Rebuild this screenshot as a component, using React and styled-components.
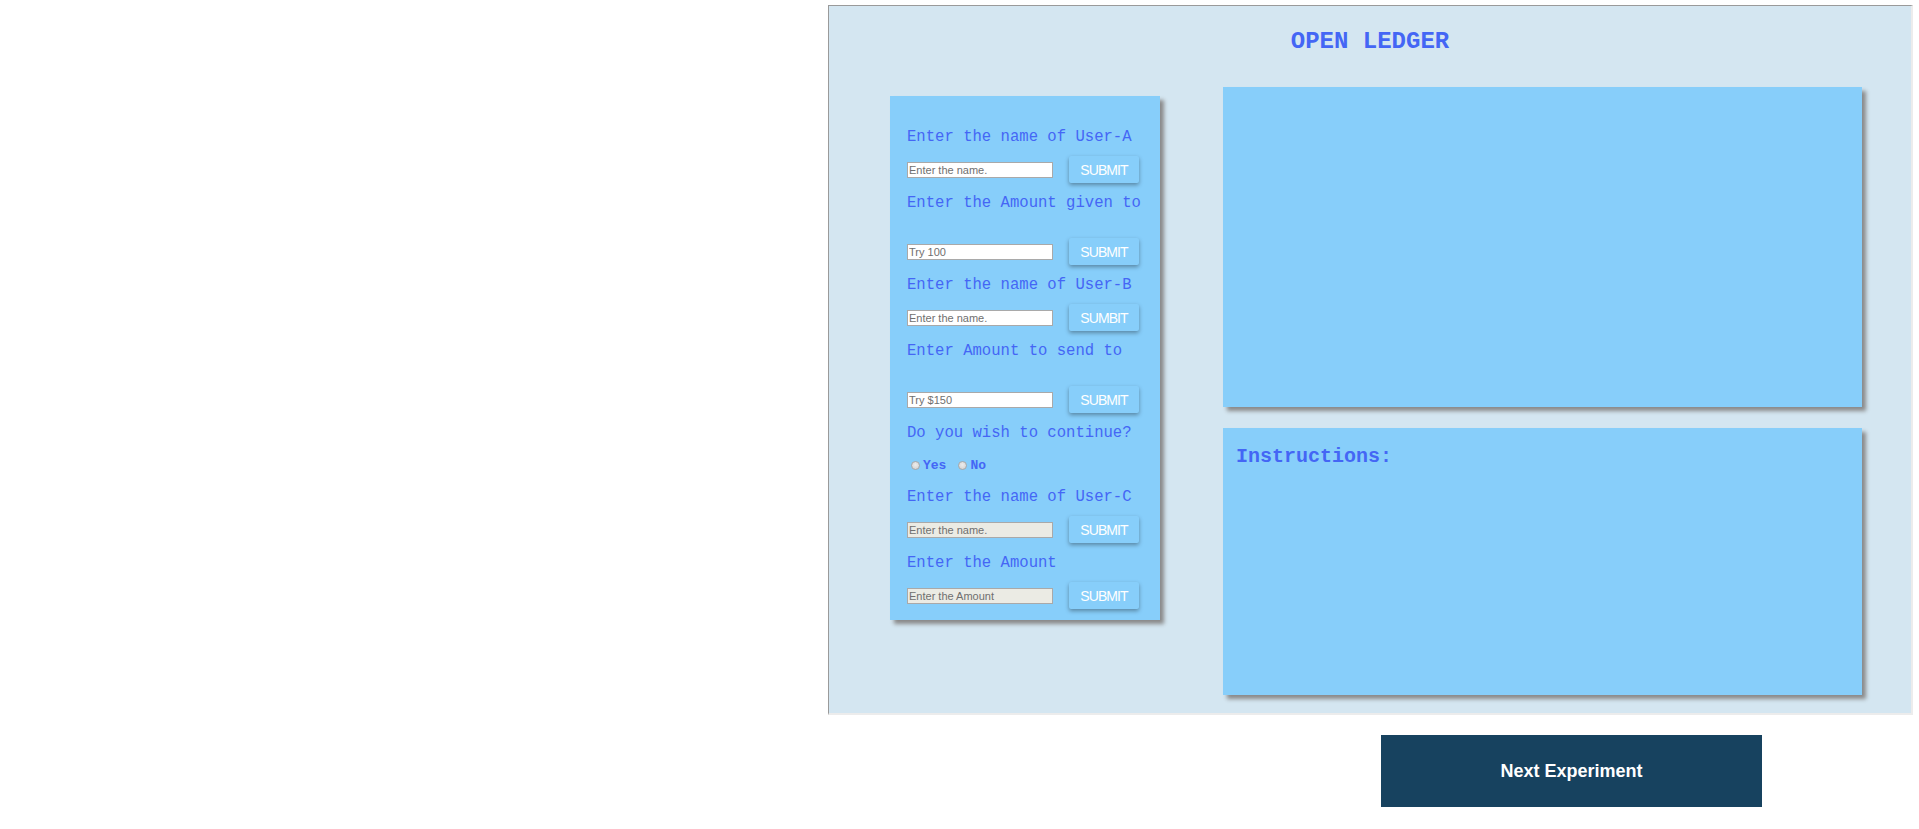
import React from 'react'
import styled, { createGlobalStyle } from 'styled-components'

const GlobalStyle = createGlobalStyle`
  html, body {
    margin: 0;
    padding: 0;
    background: #ffffff;
  }
  body {
    font-family: "Liberation Sans", Arial, sans-serif;
  }
`

const steps = [
  { label: 'Enter the name of User-A', placeholder: 'Enter the name.', button: 'SUBMIT' },
  { label: 'Enter the Amount given to', placeholder: 'Try 100', button: 'SUBMIT', tall: true },
  { label: 'Enter the name of User-B', placeholder: 'Enter the name.', button: 'SUMBIT' },
  { label: 'Enter Amount to send to', placeholder: 'Try $150', button: 'SUBMIT', tall: true },
]

const lastSteps = [
  { label: 'Enter the name of User-C', placeholder: 'Enter the name.', button: 'SUBMIT' },
  { label: 'Enter the Amount', placeholder: 'Enter the Amount', button: 'SUBMIT' },
]

function Step({ step, disabled }) {
  return (
    <>
      <Label $tall={step.tall}>{step.label}</Label>
      <Row>
        <TextInput type="text" placeholder={step.placeholder} disabled={disabled} />
        <SubmitButton>{step.button}</SubmitButton>
      </Row>
    </>
  )
}

function App() {
  return (
    <Page>
      <GlobalStyle />
      <Ledger>
        <Title>OPEN LEDGER</Title>

        <Body>
          <FormPanel>
            {steps.map((s, i) => (
              <Step key={i} step={s} />
            ))}

            <Label>Do you wish to continue?</Label>
            <RadioRow>
              <Radio type="radio" name="cont" id="yes" />
              <RadioText htmlFor="yes">Yes</RadioText>
              <Radio type="radio" name="cont" id="no" />
              <RadioText htmlFor="no">No</RadioText>
            </RadioRow>

            {lastSteps.map((s, i) => (
              <Step key={i} step={s} disabled />
            ))}
          </FormPanel>

          <RightColumn>
            <LedgerBox />
            <InstructionBox>
              <InstructionTitle>Instructions:</InstructionTitle>
            </InstructionBox>
          </RightColumn>
        </Body>
      </Ledger>

      <Footer>
        <NextButton>Next Experiment</NextButton>
      </Footer>
    </Page>
  )
}

export default App

const Page = styled.div`
  display: flex;
  flex-direction: column;
  align-items: flex-end;
  padding: 5px 6px 0 0;
`

const Ledger = styled.div`
  width: 1085px;
  box-sizing: border-box;
  background: #d4e6f1;
  border-style: solid;
  border-width: 1px 2px 2px 1px;
  border-color: #9a9a9a #ececec #ececec #9a9a9a;
  padding-bottom: 18px;
`

const Title = styled.h1`
  margin: 21px 0 0;
  text-align: center;
  font-family: "Liberation Mono", "Courier New", monospace;
  font-size: 24px;
  font-weight: bold;
  line-height: 30px;
  color: #4466f5;
`

const Body = styled.div`
  display: grid;
  grid-template-columns: 270px 639px;
  column-gap: 63px;
  align-items: start;
  margin-top: 30px;
  padding-left: 61px;
`

const FormPanel = styled.div`
  margin-top: 9px;
  background: #87cefa;
  box-shadow: 4px 4px 4px #8a8a8a;
  padding: 32px 0 11px 17px;
  display: flex;
  flex-direction: column;
`

const Label = styled.div`
  font-family: "Liberation Mono", "Courier New", monospace;
  font-size: 15.6px;
  line-height: 18px;
  color: #4466f5;
  white-space: nowrap;
  margin-bottom: ${(p) => (p.$tall ? '26px' : '10px')};
`

const Row = styled.div`
  display: flex;
  align-items: center;
  height: 27px;
  margin-bottom: 11px;

  &:last-child {
    margin-bottom: 0;
  }
`

const TextInput = styled.input`
  box-sizing: border-box;
  width: 146px;
  height: 16px;
  margin: 0 16px 0 0;
  padding: 0 1px;
  border: 1px solid #a9a9a9;
  background: ${(p) => (p.disabled ? '#ebebe4' : '#ffffff')};
  font-family: "Liberation Sans", Arial, sans-serif;
  font-size: 11px;
  color: #333;
  outline: none;

  &::placeholder {
    color: #6f6f6f;
    opacity: 1;
  }
`

const SubmitButton = styled.button`
  box-sizing: border-box;
  width: 70px;
  height: 27px;
  padding: 0;
  border: none;
  border-radius: 2px;
  background: #87cefa;
  box-shadow: 0 2px 4px rgba(0, 0, 0, 0.35);
  color: #ffffff;
  font-family: "Liberation Sans", Arial, sans-serif;
  font-size: 14px;
  letter-spacing: -0.9px;
  cursor: pointer;
`

const RadioRow = styled.div`
  display: flex;
  align-items: center;
  height: 16px;
  margin: 6px 0 14px 4px;
`

const Radio = styled.input`
  appearance: none;
  box-sizing: border-box;
  width: 9px;
  height: 9px;
  margin: 0 3px 2px 0;
  border-radius: 50%;
  border: 1px solid #a8a8a8;
  background: radial-gradient(circle at 50% 40%, #ececec, #cfcfcf);

  & + label + & {
    margin-left: 12px;
  }
`

const RadioText = styled.label`
  font-family: "Liberation Mono", "Courier New", monospace;
  font-size: 13px;
  font-weight: bold;
  line-height: 16px;
  color: #4466f5;
`

const RightColumn = styled.div`
  display: flex;
  flex-direction: column;
  gap: 21px;
`

const LedgerBox = styled.div`
  height: 320px;
  background: #87cefa;
  box-shadow: 4px 4px 4px #8a8a8a;
`

const InstructionBox = styled.div`
  height: 267px;
  box-sizing: border-box;
  background: #87cefa;
  box-shadow: 4px 4px 4px #8a8a8a;
  padding: 17px 13px;
`

const InstructionTitle = styled.h3`
  margin: 0;
  font-family: "Liberation Mono", "Courier New", monospace;
  font-size: 20px;
  font-weight: bold;
  line-height: 24px;
  color: #4466f5;
`

const Footer = styled.div`
  width: 1085px;
  display: flex;
  justify-content: flex-end;
  padding-right: 151px;
  box-sizing: border-box;
  margin-top: 20px;
`

const NextButton = styled.button`
  width: 381px;
  height: 72px;
  border: none;
  background: #17425f;
  color: #ffffff;
  font-family: "Liberation Sans", Arial, sans-serif;
  font-size: 18px;
  font-weight: bold;
  cursor: pointer;
`
